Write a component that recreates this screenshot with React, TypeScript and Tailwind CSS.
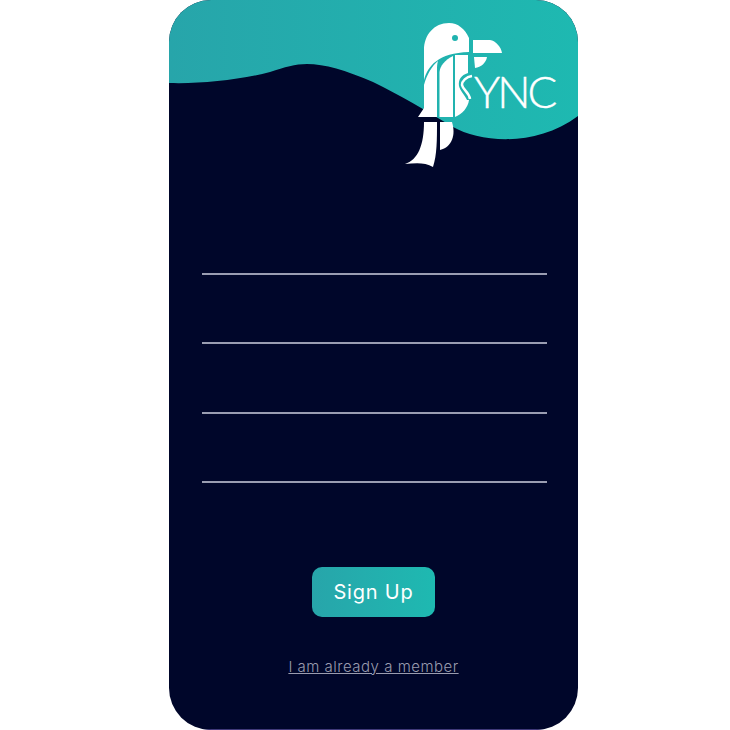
import React from "react";

function Wave() {
  return (
    <svg className="absolute left-0 top-0" width="409" height="180" viewBox="169 0 409 180" fill="none">
      <defs>
        <linearGradient id="teal" x1="0" y1="0" x2="1" y2="0">
          <stop offset="0" stopColor="#27a5aa" />
          <stop offset="1" stopColor="#1eb9b1" />
        </linearGradient>
      </defs>
      <path
        d="M169 83C200 84 240 80 270 72C285 67 295 64 307 64C325 64 345 70 373 82C400 95 425 110 453 127C480 142 535 148 578 116V0H169Z"
        fill="url(#teal)"
      />
    </svg>
  );
}

function Parrot() {
  return (
    <svg className="absolute left-0 top-0" width="409" height="180" viewBox="169 0 409 180" fill="#ffffff">
      {/* head */}
      <path d="M469 52V38C465 29 458 23 449 23C434 23 424 35 424 50V80C428 66 438 53 469 52Z" />
      <circle cx="455" cy="38" r="3" fill="#1fb3af" />
      {/* beak */}
      <path d="M473 40H490C496 41 501 47 502 53H473Z" />
      <path d="M474 57H487C486 63 481 67 475 68Z" />
      {/* body strips */}
      <path d="M424 85C427 74 432 66 438 61C437 64 437 67 437 70V117H418L424 108Z" />
      <path d="M439.5 72C440 66 445 60 453 56V117H439.5Z" />
      <path d="M455 55H468V73C461 75 458 80 459 86C460 91 465 95 467 100H469C468 108 462 114 455 117Z" />
      <path d="M472 76C466 77 462 81 462 85C463 90 469 92 470 99" fill="none" stroke="#ffffff" strokeWidth="2.5" />
      {/* tail */}
      <path d="M424 122H437C437 140 437 155 433 167C425 162 415 163 405 164C418 160 424 145 424 122Z" />
      <path d="M440 122H452C456 135 452 147 440 150Z" />
    </svg>
  );
}

function Field({ label }: { label: string }) {
  return (
    <input
      type="text"
      aria-label={label}
      className="h-[69.33px] w-full border-b-2 border-[#9a9db2] bg-transparent text-white outline-none"
    />
  );
}

export default function App() {
  return (
    <div className="h-[730px] w-[730px] bg-white pl-[169px] font-['Inter',sans-serif]">
      <div className="relative flex h-[730px] w-[409px] flex-col items-center overflow-hidden rounded-[42px] bg-[#00062a] px-[33px] pt-[205.67px]">
        <Wave />
        <Parrot />
        <span className="absolute left-[305px] top-[64px] font-['Lato',sans-serif] text-[44px] font-light leading-[54px] tracking-[-3px] text-white [-webkit-text-stroke:0.4px_white]">YNC</span>

        <div className="relative flex w-[345px] shrink-0 flex-col self-start">
          <Field label="Name" />
          <Field label="Email" />
          <Field label="Password" />
          <Field label="Confirm password" />
        </div>

        <button className="relative mt-[84px] h-[50px] w-[123px] rounded-[10px] bg-gradient-to-r from-[#27a5aa] to-[#1eb9b1] pt-px text-[20px] tracking-[0.04em] text-white">
          Sign Up
        </button>

        <a className="relative mt-[39px] text-[15px] font-light leading-[22px] tracking-[0.5px] text-[#9a9caf] underline">
          I am already a member
        </a>

        <div className="absolute inset-x-[28px] bottom-0 h-px bg-[#40397a]" />
      </div>
    </div>
  );
}
